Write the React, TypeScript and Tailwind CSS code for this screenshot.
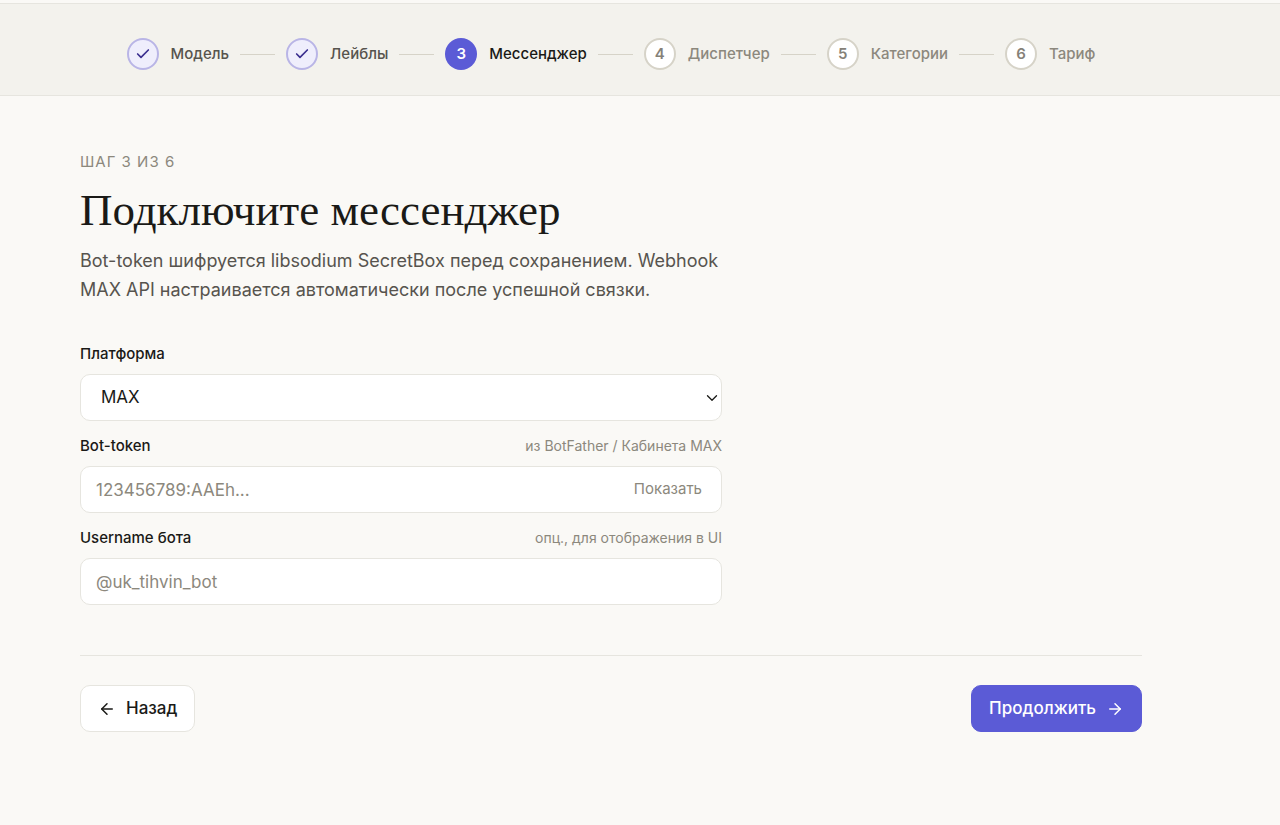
import { useState } from "react";
import type { ReactNode } from "react";
import { ArrowLeft, ArrowRight, Check, ChevronDown } from "lucide-react";

type StepState = "done" | "current" | "upcoming";

const steps: { label: string; state: StepState }[] = [
  { label: "Модель", state: "done" },
  { label: "Лейблы", state: "done" },
  { label: "Мессенджер", state: "current" },
  { label: "Диспетчер", state: "upcoming" },
  { label: "Категории", state: "upcoming" },
  { label: "Тариф", state: "upcoming" },
];

const circleStyles: Record<StepState, string> = {
  done: "border-2 border-[#b9b5e6] bg-[#efeefc] text-[#3b2f8f]",
  current: "bg-[#5b5bd6] text-white",
  upcoming: "border-2 border-[#d6d3c8] bg-white text-[#858178]",
};

const labelStyles: Record<StepState, string> = {
  done: "text-[#57544e]",
  current: "text-[#1a1a17]",
  upcoming: "text-[#8c887d]",
};

function Stepper() {
  return (
    <nav aria-label="Шаги настройки" className="border-y border-[#e6e5df] bg-[#f3f2ed]">
      <ol className="flex max-w-[1222px] items-center justify-center gap-[11px] px-20 pt-[34px] pb-[25px]">
        {steps.map((step, index) => (
          <li
            key={step.label}
            aria-current={step.state === "current" ? "step" : undefined}
            className="flex items-center gap-[11px]"
          >
            {index > 0 && <span className="h-px w-[35px] bg-[#d6d3c8]" />}
            <span className="flex items-center gap-3">
              <span
                className={`flex size-8 items-center justify-center rounded-full text-[15px] font-semibold ${circleStyles[step.state]}`}
              >
                {step.state === "done" ? <Check size={16} strokeWidth={2.5} /> : index + 1}
              </span>
              <span className={`text-[15px] leading-6 font-medium ${labelStyles[step.state]}`}>{step.label}</span>
            </span>
          </li>
        ))}
      </ol>
    </nav>
  );
}

function Field({ id, label, hint, children }: { id: string; label: string; hint?: string; children: ReactNode }) {
  return (
    <div className="flex flex-col gap-2">
      <div className="flex items-center justify-between">
        <label htmlFor={id} className="text-[15px] leading-6 font-medium">
          {label}
        </label>
        {hint && <span className="text-sm leading-6 text-[#8c887d]">{hint}</span>}
      </div>
      {children}
    </div>
  );
}

const controlStyle =
  "h-[47px] w-full rounded-[10px] border border-[#e6e5df] bg-white text-[17px] outline-none placeholder:text-[#8c887d] focus:border-[#5b5bd6]";

export default function App() {
  const [tokenVisible, setTokenVisible] = useState(false);

  return (
    <div className="min-h-screen bg-[#faf9f6] pt-[3px] font-['Inter',sans-serif] text-[#1a1a17]">
      <Stepper />
      <main className="max-w-[1222px] px-20 py-[54px]">
        <p className="text-[15px] leading-6 tracking-[1px] text-[#8c887d] uppercase">Шаг 3 из 6</p>
        <h1 className="mt-2.5 font-['Liberation_Serif',serif] text-[45px] leading-[52px]">
          Подключите мессенджер
        </h1>
        <p className="mt-2.5 max-w-[672px] text-[18px] leading-[29px] text-[#57544e]">
          Bot-token шифруется libsodium SecretBox перед сохранением. Webhook MAX API настраивается автоматически
          после успешной связки.
        </p>

        <form onSubmit={(event) => event.preventDefault()}>
          <div className="mt-[38px] flex max-w-[642px] flex-col gap-[13px]">
            <Field id="platform" label="Платформа">
              <div className="relative">
                <select id="platform" className={`appearance-none pr-8 pl-5 ${controlStyle}`}>
                  <option>MAX</option>
                </select>
                <ChevronDown
                  size={18}
                  strokeWidth={1.75}
                  className="pointer-events-none absolute inset-y-0 right-px my-auto"
                />
              </div>
            </Field>
            <Field id="token" label="Bot-token" hint="из BotFather / Кабинета MAX">
              <div className="relative">
                <input
                  id="token"
                  type={tokenVisible ? "text" : "password"}
                  placeholder="123456789:AAEh..."
                  className={`pr-28 pl-[15px] ${controlStyle}`}
                />
                <button
                  type="button"
                  onClick={() => setTokenVisible(!tokenVisible)}
                  className="absolute inset-y-0 right-5 text-[15px] text-[#8c887d]"
                >
                  {tokenVisible ? "Скрыть" : "Показать"}
                </button>
              </div>
            </Field>
            <Field id="username" label="Username бота" hint="опц., для отображения в UI">
              <input
                id="username"
                type="text"
                placeholder="@uk_tihvin_bot"
                className={`px-[15px] ${controlStyle}`}
              />
            </Field>
          </div>

          <div className="mt-[50px] flex items-center justify-between border-t border-[#e6e5df] pt-[29px]">
            <button
              type="button"
              className="flex h-[47px] items-center gap-2.5 rounded-[10px] border border-[#e6e5df] bg-white px-[17px] text-[17px] font-medium"
            >
              <ArrowLeft size={18} strokeWidth={2} />
              Назад
            </button>
            <button
              type="submit"
              className="flex h-[47px] items-center gap-2.5 rounded-[10px] border border-[#5b5bd6] bg-[#5b5bd6] px-[17px] text-[17px] font-medium text-white"
            >
              Продолжить
              <ArrowRight size={18} strokeWidth={2} />
            </button>
          </div>
        </form>
      </main>
    </div>
  );
}
